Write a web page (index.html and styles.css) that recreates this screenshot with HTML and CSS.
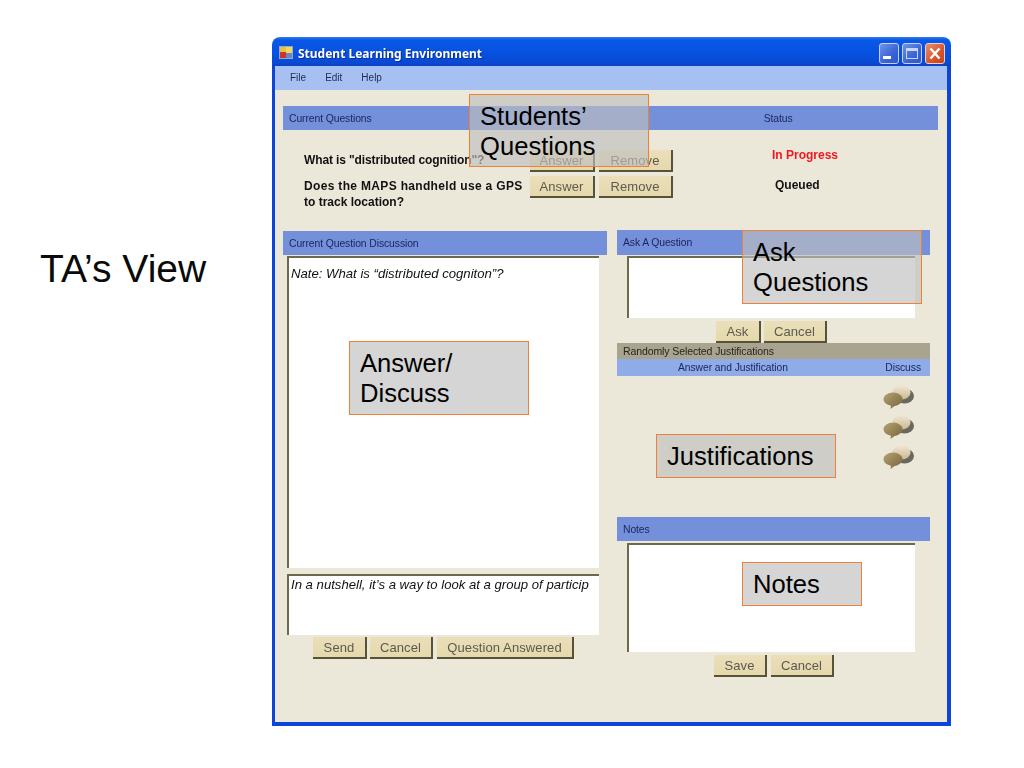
FILE: index.html
```html
<!DOCTYPE html>
<html lang="en">
<head>
<meta charset="utf-8">
<title>TA's View</title>
<link rel="stylesheet" href="styles.css">
</head>
<body>
<svg class="defs" width="0" height="0" aria-hidden="true">
  <defs>
    <linearGradient id="bubbleBack" x1="0" y1="0" x2="0" y2="1">
      <stop offset="0" stop-color="#efe6d2"/>
      <stop offset="1" stop-color="#cbb892"/>
    </linearGradient>
    <linearGradient id="bubbleFront" x1="0" y1="0" x2="1" y2="1">
      <stop offset="0" stop-color="#b5a273"/>
      <stop offset="1" stop-color="#75643a"/>
    </linearGradient>
    <symbol id="bubbles" viewBox="0 0 32 24">
      <ellipse cx="21.500" cy="11" rx="9.500" ry="7.500" fill="#3e3e35" opacity=".75"/>
      <ellipse cx="18.500" cy="7.500" rx="9" ry="7" fill="url(#bubbleBack)"/>
      <path d="M10 7.500c5 0 9.500 3 9.500 6.500s-4 6.500-8 7l-4 3 .5-3.300C4 20 .5 17.500.5 14S5 7.500 10 7.500z" fill="url(#bubbleFront)"/>
    </symbol>
  </defs>
</svg>
<main class="slide">
  <h1 class="slide-title">TA’s View</h1>
  <section class="window">
    <header class="titlebar">
      <svg class="app-icon" viewBox="0 0 14 13" width="14" height="13" aria-hidden="true">
        <rect width="14" height="13" fill="#8fa8d8"/>
        <rect x="1" y="1" width="6" height="5" fill="#e9c13c"/>
        <rect x="7" y="1" width="6" height="6" fill="#f5d75a"/>
        <rect x="1" y="6" width="6" height="6" fill="#c9362c"/>
        <rect x="7" y="7" width="6" height="5" fill="#6f86c4"/>
      </svg>
      <span class="title-text">Student Learning Environment</span>
      <div class="controls">
        <span class="control control-min"><i class="glyph-min"></i></span>
        <span class="control control-max"><i class="glyph-max"></i></span>
        <span class="control control-close">
          <svg viewBox="0 0 20 21" width="20" height="21" aria-hidden="true"><path d="M5.500 5.500l9 10M14.500 5.500l-9 10" stroke="#fff" stroke-width="2.400"/></svg>
        </span>
      </div>
    </header>
    <div class="frame">
      <nav class="menubar"><span>File</span><span>Edit</span><span>Help</span></nav>
      <div class="content">
        <div class="bar bar-questions"><span>Current Questions</span><span class="status-head">Status</span></div>
        <div class="question question-first">
          <p class="q-text">What is "distributed cognition"?</p>
          <span class="btn btn-answer">Answer</span>
          <span class="btn btn-remove">Remove</span>
          <strong class="status status-red">In Progress</strong>
        </div>
        <div class="question">
          <p class="q-text"><span class="q-wide">Does the MAPS handheld use a GPS</span><br>to track location?</p>
          <span class="btn btn-answer">Answer</span>
          <span class="btn btn-remove">Remove</span>
          <strong class="status status-queued">Queued</strong>
        </div>
        <div class="panes">
          <div class="pane-left">
            <div class="bar">Current Question Discussion</div>
            <div class="field field-discussion">Nate: What is “distributed cogniton”?</div>
            <div class="field field-reply">In a nutshell, it’s a way to look at a group of particip</div>
            <div class="btn-row btn-row-send">
              <span class="btn btn-send">Send</span>
              <span class="btn btn-cancel">Cancel</span>
              <span class="btn btn-answered">Question Answered</span>
            </div>
          </div>
          <div class="pane-right">
            <div class="bar bar-tall">Ask A Question</div>
            <div class="field field-ask"></div>
            <div class="btn-row btn-row-ask">
              <span class="btn btn-ask">Ask</span>
              <span class="btn btn-cancel">Cancel</span>
            </div>
            <div class="sub-title">Randomly Selected Justifications</div>
            <div class="sub-head"><span class="sub-answer">Answer and Justification</span><span>Discuss</span></div>
            <div class="bubble-list">
              <svg class="bubble" aria-hidden="true"><use href="#bubbles"/></svg>
              <svg class="bubble" aria-hidden="true"><use href="#bubbles"/></svg>
              <svg class="bubble" aria-hidden="true"><use href="#bubbles"/></svg>
            </div>
            <div class="bar bar-notes">Notes</div>
            <div class="field field-notes"></div>
            <div class="btn-row btn-row-notes">
              <span class="btn btn-save">Save</span>
              <span class="btn btn-cancel">Cancel</span>
            </div>
          </div>
        </div>
      </div>
    </div>
    <div class="callout callout-students">Students’<br>Questions</div>
    <div class="callout callout-ask">Ask<br>Questions</div>
    <div class="callout callout-answer">Answer/<br>Discuss</div>
    <div class="callout callout-just">Justifications</div>
    <div class="callout callout-notes">Notes</div>
  </section>
</main>
</body>
</html>
```
FILE: styles.css
```css
* { box-sizing: border-box; }
html, body { margin: 0; height: 768px; overflow: hidden; background: #fff; }
body { font-family: "Liberation Sans", Arial, sans-serif; color: #000; }
.defs { position: absolute; }

.slide { display: flex; align-items: flex-start; padding-top: 37px; }
.slide-title {
  width: 272px; margin: 0; padding: 210px 0 0 40px;
  font-size: 39px; line-height: 44px; font-weight: 400; color: #0a0a0a;
}

.window { position: relative; width: 679px; height: 689px; flex: none; }
.titlebar {
  display: flex; align-items: center; height: 29px; padding: 0 6px 0 7px;
  border-radius: 8px 8px 0 0;
  background: linear-gradient(#2f7cf0 0, #0a58e6 3px, #0750df 60%, #0a49d2 90%, #0b3fc0 100%);
  filter: blur(.4px);
}
.app-icon { flex: none; margin-top: 2px; }
.title-text {
  margin-left: 5px; margin-top: 4px; font-family: "Noto Sans", sans-serif; font-size: 12px; font-weight: 700;
  color: #fff; text-shadow: 1px 1px 0 #0a2f9a;
}
.controls { display: flex; gap: 3px; margin-left: auto; margin-top: 3px; }
.control {
  position: relative; display: flex; align-items: center; justify-content: center;
  width: 20px; height: 21px; border: 1px solid #c3d2f4; border-radius: 3px;
  background: linear-gradient(135deg, #6f94e6, #3a63d8 60%, #2f57cf);
}
.control-close { border-color: #e9cfc4; background: linear-gradient(135deg, #e98f6e, #d9552a 60%, #c5401c); }
.control-close svg { position: absolute; left: -1px; top: -1px; }
.glyph-min { width: 8px; height: 3px; margin: 9px 5px 0 0; background: #fff; }
.glyph-max { width: 12px; height: 11px; border: 1px solid #c9d6f5; border-top-width: 3px; }

.frame {
  height: 660px; background: #ece8d9;
  border-style: solid; border-color: #0d45d8; border-width: 0 4px 4px 3px;
  filter: blur(.4px);
}
.menubar {
  display: flex; height: 24px; align-items: center; gap: 19px; padding: 0 0 2px 15px;
  background: #a6c0f1; font-size: 10px; color: #1e2a55;
}
.content { padding: 16px 9px 0 8px; }

.bar {
  display: flex; align-items: center; height: 24px; padding-left: 6px;
  background: #7590db; font-size: 10.400px; letter-spacing: -.1px; color: #1b2760;
}
.bar-tall { height: 25px; }
.status-head { margin-left: 392px; }

.question { display: flex; align-items: flex-start; margin-top: 4px; }
.question-first { margin-top: 20px; }
.q-text {
  width: 247px; flex: none; margin: 0; padding: 2px 0 0 21px;
  font-size: 12px; line-height: 16px; font-weight: 700; color: #111;
}
.q-wide { letter-spacing: .33px; }
.question-first .q-text { padding-top: 2px; letter-spacing: -.12px; }
.status { margin-left: 99px; font-size: 12px; line-height: 16px; }
.status-red { color: #f01820; margin-top: -3px; }
.status-queued { color: #111; margin-left: 102px; margin-top: 1px; }

.btn {
  display: flex; align-items: center; justify-content: center; flex: none; height: 22px;
  border-right: 2px solid #57533a; border-bottom: 2px solid #57533a;
  background: linear-gradient(#eadfba, #e5d8ac);
  font-size: 13px; letter-spacing: .1px; color: #5c5a50;
}
.btn-answer { width: 65px; }
.btn-remove { width: 74px; margin-left: 4px; }
.btn-send { width: 54px; }
.btn-cancel { width: 63px; }
.btn-answered { width: 137px; margin-left: 1px; }
.btn-ask { width: 45px; }
.btn-save { width: 53px; }
.btn-row { display: flex; gap: 3px; }
.btn-row-send { margin: 2px 0 0 30px; }
.btn-row-ask { margin: 3px 0 0 99px; }
.btn-row-notes { margin: 3px 0 0 97px; gap: 4px; }

.panes { display: flex; gap: 10px; margin-top: 20px; }
.pane-left { width: 324px; flex: none; padding-top: 1px; }
.pane-right { width: 313px; flex: none; }

.field {
  background: #fff; border-style: solid; border-color: #6d6a4c; border-width: 2px 0 0 2px;
  font-size: 13.150px; font-style: italic; color: #111; padding: 8px 0 0 2px;
}
.field-discussion { width: 312px; height: 312px; margin: 1px 0 0 4px; }
.field-reply { width: 312px; height: 61px; margin: 6px 0 0 4px; padding-top: 1px; }
.field-ask { width: 288px; height: 62px; margin: 1px 0 0 10px; }
.field-notes { width: 288px; height: 109px; margin: 2px 0 0 10px; }

.sub-title {
  height: 16px; padding-left: 6px; background: #a9a48f; line-height: 16px;
  font-size: 10.500px; letter-spacing: -.1px; color: #26241c;
}
.sub-head {
  display: flex; justify-content: space-between; height: 17px; padding: 0 9px 0 61px;
  background: #8fabe8; line-height: 17px; font-size: 10.300px; letter-spacing: -.05px; color: #1b2760;
}
.bubble-list {
  display: flex; flex-direction: column; align-items: flex-end; gap: 6px;
  margin-top: 9px; padding-right: 15px;
}
.bubble { display: block; width: 32px; height: 24px; filter: blur(.6px); }
.bar-notes { margin-top: 48px; }

.callout {
  position: absolute; width: 180px; padding: 6px 10px;
  border: 1px solid #ee8136; background: rgba(190, 190, 190, .65);
  font-size: 25.600px; line-height: 30px; color: #000;
}
.callout-students { left: 197px; top: 57px; height: 73px; }
.callout-ask { left: 470px; top: 193px; height: 74px; }
.callout-answer { left: 77px; top: 304px; height: 74px; }
.callout-just { left: 384px; top: 397px; height: 44px; }
.callout-notes { left: 470px; top: 525px; width: 120px; height: 44px; }
```
